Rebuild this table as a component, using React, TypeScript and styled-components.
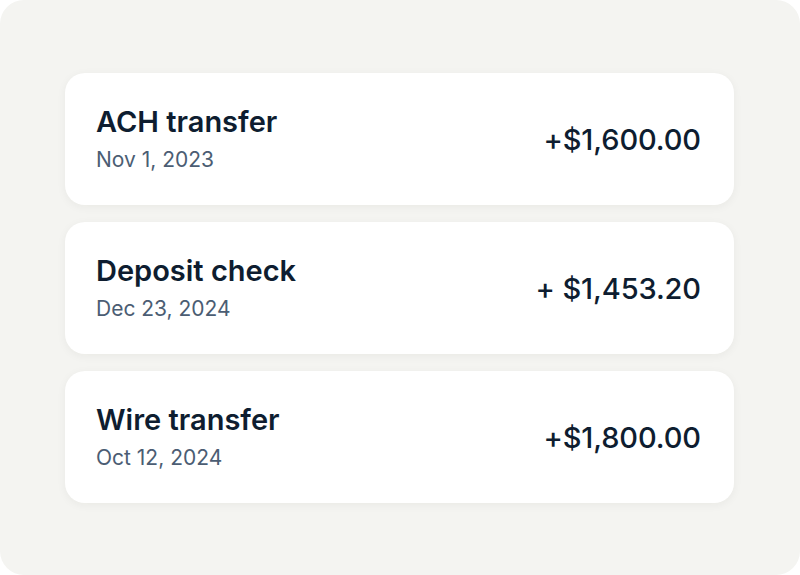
import React from "react";
import styled, { createGlobalStyle } from "styled-components";

const Global = createGlobalStyle`
  html, body { margin: 0; padding: 0; background: #ffffff; }
  body { font-family: Inter, "Noto Sans", sans-serif; -webkit-font-smoothing: antialiased; }
`;

const Frame = styled.div`
  width: 800px;
  height: 575px;
  box-sizing: border-box;
  background: #f4f4f1;
  border-radius: 24px;
  padding: 73px 66px 0 65px;
  display: flex;
  flex-direction: column;
  gap: 17px;
`;

const Card = styled.div`
  height: 132px;
  box-sizing: border-box;
  background: #ffffff;
  border-radius: 20px;
  box-shadow: 0 2px 10px rgba(30, 30, 20, 0.05);
  padding: 0 33px 0 31px;
  display: flex;
  align-items: center;
  justify-content: space-between;
`;

const Info = styled.div`
  display: flex;
  flex-direction: column;
  gap: 8px;
`;

const Title = styled.div`
  font-size: 29px;
  font-weight: 600;
  color: #0e1d30;
  letter-spacing: 0;
  line-height: 34px;
`;

const Date = styled.div`
  font-size: 21px;
  font-weight: 400;
  color: #4b5d73;
  letter-spacing: 0;
  line-height: 26px;
`;

const Amount = styled.div`
  font-size: 29px;
  font-weight: 500;
  color: #0e1d30;
  letter-spacing: -0.1px;
`;

const items = [
  { title: "ACH transfer", date: "Nov 1, 2023", amount: "+$1,600.00" },
  { title: "Deposit check", date: "Dec 23, 2024", amount: "+ $1,453.20" },
  { title: "Wire transfer", date: "Oct 12, 2024", amount: "+$1,800.00" },
];

export default function App() {
  return (
    <>
      <Global />
      <Frame>
        {items.map((it) => (
          <Card key={it.title}>
            <Info>
              <Title>{it.title}</Title>
              <Date>{it.date}</Date>
            </Info>
            <Amount>{it.amount}</Amount>
          </Card>
        ))}
      </Frame>
    </>
  );
}
